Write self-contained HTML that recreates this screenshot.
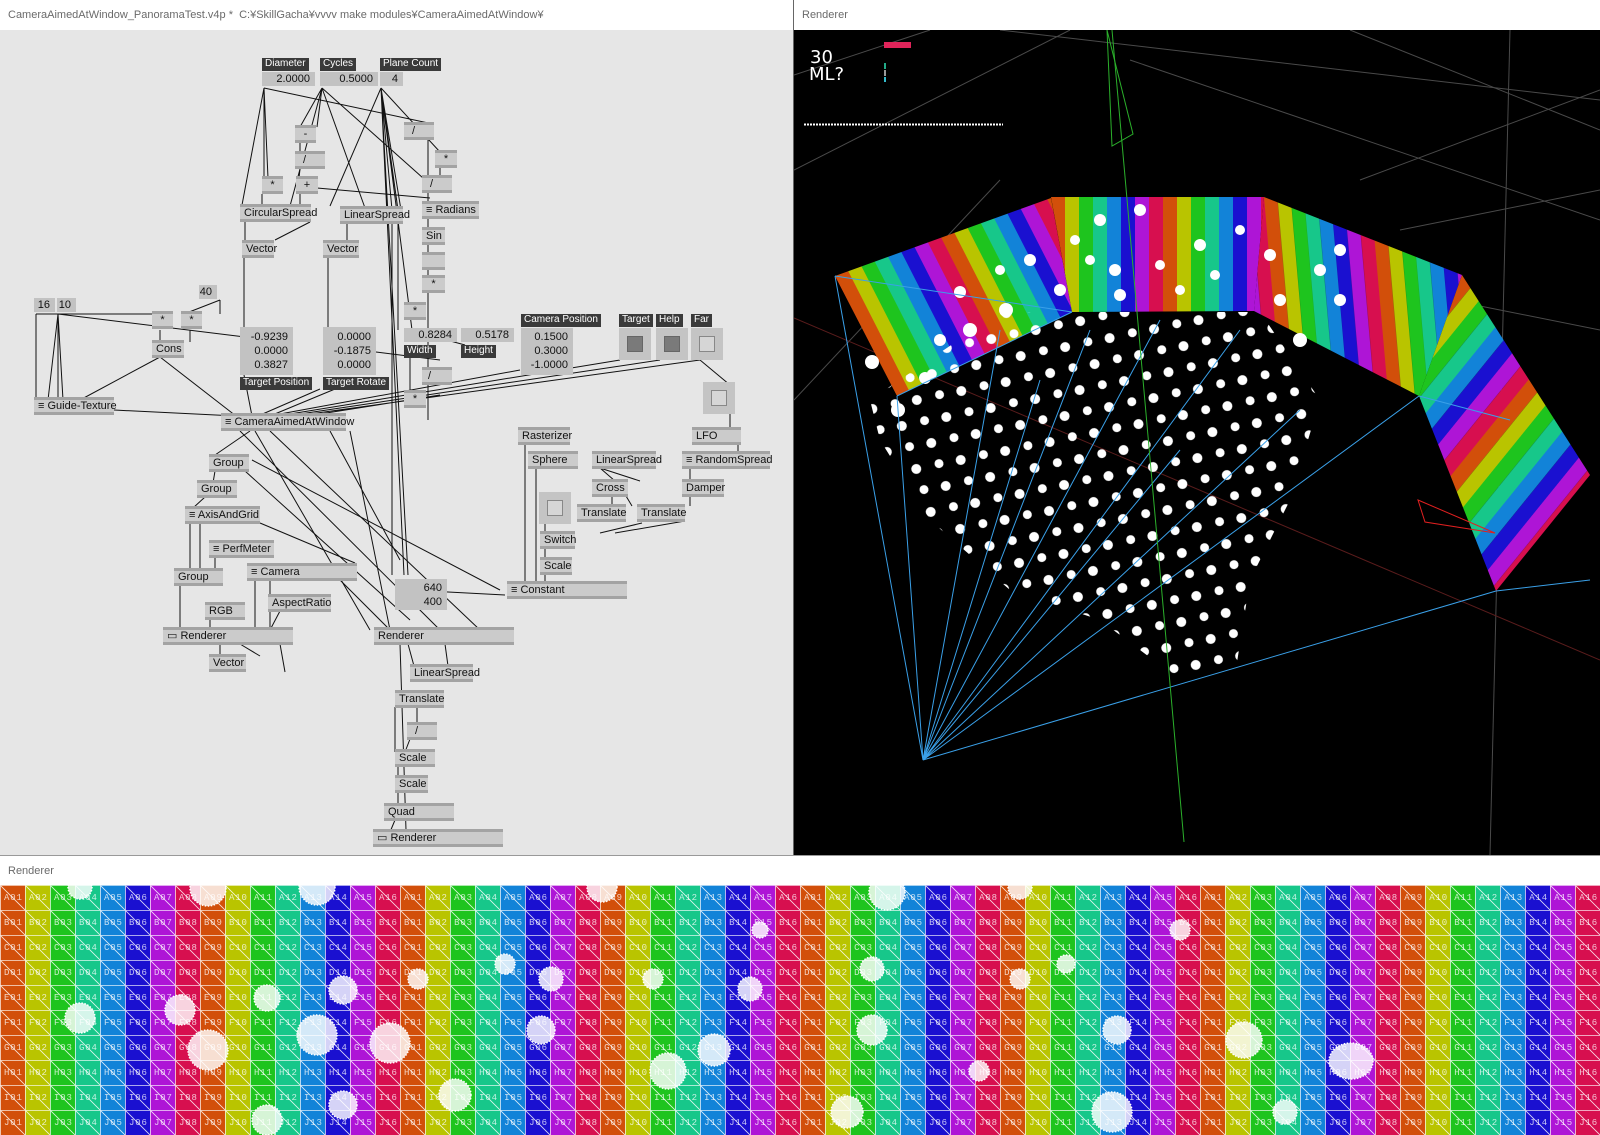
<!DOCTYPE html>
<html><head><meta charset="utf-8">
<style>
*{margin:0;padding:0;box-sizing:border-box}
body{width:1600px;height:1135px;overflow:hidden;background:#fff;font-family:"Liberation Sans","Noto Sans CJK JP",sans-serif;position:relative}
.title{position:absolute;font-size:11px;color:#6a6a6a}
#left{position:absolute;left:0;top:30px;width:793px;height:825px;background:#e6e6e6}
.n{position:absolute;background:#cbcbcb;height:18px;border-top:3px solid #a3a3a3;border-bottom:3px solid #a3a3a3;font-size:11px;line-height:12px;padding-left:4px;color:#111;white-space:nowrap}
.v{position:absolute;background:#c2c2c2;font-size:11px;line-height:14px;text-align:right;padding-right:5px;color:#111;white-space:pre}
.t{position:absolute;background:#3a3a3a;color:#fff;font-size:10px;line-height:12px;height:13px;padding:0 3px;white-space:nowrap}
.tg{position:absolute;background:#c4c4c4;width:32px;height:32px}
.tg i{position:absolute;left:8px;top:8px;width:16px;height:16px;border:1px solid #888;background:#d6d6d6}
.tg.on i{background:#7a7a7a;border-color:#666}
.grid-t{position:absolute;left:4px;font-family:"Liberation Mono",monospace;font-size:9px;letter-spacing:0.85px;color:rgba(255,255,255,0.75);white-space:pre;line-height:10px}
</style></head><body>
<div class="title" style="left:8px;top:9px">CameraAimedAtWindow_PanoramaTest.v4p *&nbsp; C:¥SkillGacha¥vvvv make modules¥CameraAimedAtWindow¥</div>
<div class="title" style="left:802px;top:9px">Renderer</div>
<div style="position:absolute;left:793px;top:0;width:1px;height:855px;background:#666"></div>

<div id="left">
<svg width="793" height="825" viewBox="0 30 793 825" style="position:absolute;left:0;top:0" stroke="#111" stroke-width="1" fill="none">
<path d="M264 88L264 178M264 88L268 178M264 88L433 124M264 88L242 205M322 88L300 127M322 88L317 127M322 88L365 208M322 88L423 178M322 88L290 206M381 88L392 210M381 88L398 210M381 88L401 210M381 88L440 152M381 88L330 206M381 88L412 330M381 88L408 575M381 88L404 575"/>
<path d="M300 143L300 153M300 169L299 178M262 194L262 205M300 194L300 205M440 168L440 177M428 140L428 420M428 193L428 203M428 219L428 228M428 245L428 258M428 278L428 300M317 188L430 198M245 222L245 240M310 222L275 240M347 224L347 240M244 258L244 330M328 258L328 330M398 224L398 330M392 224L392 575"/>
<path d="M36 314L36 400M58 314L48 400M58 314L58 400M58 314L63 400M58 314L245 337M36 314L155 314M220 300L184 314M220 300L220 314M160 330L160 342M190 330L190 342M160 357L80 400M160 357L236 416M114 410L236 416"/>
<path d="M244 375L252 416M320 389L258 416M335 389L270 416M376 352L440 360M410 345L410 392M410 330L465 345M280 414L520 370M290 414L620 360M300 414L660 360M310 414L700 360M320 414L440 395M250 431L215 455M350 431L390 630M255 431L370 630M240 431L440 630M270 431L480 630M330 431L400 560"/>
<path d="M215 471L213 483M205 497L193 508M245 471L410 620M252 460L500 590M260 523L355 563M190 523L190 570M200 523L200 570M215 557L215 570M180 586L180 630M210 619L210 630M255 580L255 630M270 580L270 630M280 611L270 630M220 644L220 656M240 644L260 656M280 644L285 672M340 580L390 630"/>
<path d="M525 444L525 583M536 468L536 583M600 468L615 481M600 468L640 481M612 496L612 506M626 496L632 506M730 410L730 430M738 444L738 452M690 468L690 480M690 496L690 506M642 523L600 533M685 521L615 533M545 524L545 533M545 548L545 560M545 574L545 583M410 590L505 595"/>
<path d="M400 644L406 830M408 644L414 666M445 644L448 666M395 707L395 752M417 707L417 723M410 739L405 752M398 766L398 777M398 792L398 805M395 820L390 832M700 360L730 385"/>
</svg>
<div class="t" style="left:262px;top:28px">Diameter</div><div class="v" style="left:262px;top:42px;width:53px">2.0000</div>
<div class="t" style="left:320px;top:28px">Cycles</div><div class="v" style="left:320px;top:42px;width:58px">0.5000</div>
<div class="t" style="left:380px;top:28px">Plane Count</div><div class="v" style="left:380px;top:42px;width:23px">4</div>
<div class="n" style="left:295px;top:95px;width:21px;text-align:center;padding:0">-</div>
<div class="n" style="left:295px;top:121px;width:30px;padding-left:8px">/</div>
<div class="n" style="left:262px;top:146px;width:21px;text-align:center;padding:0">*</div>
<div class="n" style="left:296px;top:146px;width:22px;text-align:center;padding:0">+</div>
<div class="n" style="left:240px;top:174px;width:71px">CircularSpread</div>
<div class="n" style="left:340px;top:176px;width:63px">LinearSpread</div>
<div class="n" style="left:404px;top:92px;width:30px;padding-left:8px">/</div>
<div class="n" style="left:435px;top:120px;width:22px;text-align:center;padding:0">*</div>
<div class="n" style="left:422px;top:145px;width:30px;padding-left:8px">/</div>
<div class="n" style="left:422px;top:171px;width:57px">≡ Radians</div>
<div class="n" style="left:422px;top:197px;width:23px">Sin</div>
<div class="n" style="left:422px;top:222px;width:23px"></div>
<div class="n" style="left:422px;top:245px;width:23px;text-align:center;padding:0">*</div>
<div class="n" style="left:242px;top:210px;width:32px">Vector</div>
<div class="n" style="left:323px;top:210px;width:36px">Vector</div>
<div class="v" style="left:34px;top:268px;width:21px">16</div><div class="v" style="left:57px;top:268px;width:19px">10</div>
<div class="v" style="left:199px;top:255px;width:18px">40</div>
<div class="n" style="left:152px;top:281px;width:21px;text-align:center;padding:0">*</div>
<div class="n" style="left:181px;top:281px;width:21px;text-align:center;padding:0">*</div>
<div class="n" style="left:152px;top:310px;width:32px">Cons</div>
<div class="n" style="left:34px;top:367px;width:80px">≡ Guide-Texture</div>
<div class="v" style="left:240px;top:297px;width:53px;height:48px;padding-top:3px">-0.9239
0.0000
0.3827</div>
<div class="t" style="left:240px;top:347px">Target Position</div>
<div class="v" style="left:323px;top:297px;width:53px;height:48px;padding-top:3px">0.0000
-0.1875
0.0000</div>
<div class="t" style="left:323px;top:347px">Target Rotate</div>
<div class="n" style="left:221px;top:383px;width:125px">≡ CameraAimedAtWindow</div>
<div class="n" style="left:404px;top:272px;width:22px;text-align:center;padding:0">*</div>
<div class="v" style="left:404px;top:298px;width:53px">0.8284</div><div class="t" style="left:404px;top:315px">Width</div>
<div class="v" style="left:461px;top:298px;width:53px">0.5178</div><div class="t" style="left:461px;top:315px">Height</div>
<div class="n" style="left:422px;top:337px;width:30px;padding-left:6px">/</div>
<div class="n" style="left:404px;top:360px;width:22px;text-align:center;padding:0">*</div>
<div class="t" style="left:521px;top:284px">Camera Position</div>
<div class="v" style="left:521px;top:298px;width:52px;height:47px;padding-top:2px">0.1500
0.3000
-1.0000</div>
<div class="t" style="left:619px;top:284px">Target</div><div class="tg on" style="left:619px;top:298px"><i></i></div>
<div class="t" style="left:656px;top:284px">Help</div><div class="tg on" style="left:656px;top:298px"><i></i></div>
<div class="t" style="left:691px;top:284px">Far</div><div class="tg" style="left:691px;top:298px"><i></i></div>
<div class="tg" style="left:703px;top:352px"><i></i></div>
<div class="n" style="left:518px;top:397px;width:52px">Rasterizer</div>
<div class="n" style="left:528px;top:421px;width:50px">Sphere</div>
<div class="n" style="left:592px;top:421px;width:64px">LinearSpread</div>
<div class="n" style="left:592px;top:449px;width:36px">Cross</div>
<div class="n" style="left:577px;top:474px;width:49px">Translate</div>
<div class="n" style="left:637px;top:474px;width:48px">Translate</div>
<div class="n" style="left:692px;top:397px;width:49px">LFO</div>
<div class="n" style="left:682px;top:421px;width:88px">≡ RandomSpread</div>
<div class="n" style="left:682px;top:449px;width:42px">Damper</div>
<div class="tg" style="left:539px;top:462px"><i></i></div>
<div class="n" style="left:540px;top:501px;width:35px">Switch</div>
<div class="n" style="left:540px;top:527px;width:32px">Scale</div>
<div class="n" style="left:507px;top:551px;width:120px">≡ Constant</div>
<div class="v" style="left:395px;top:549px;width:52px;height:31px;padding-top:2px">640
400</div>
<div class="n" style="left:209px;top:424px;width:40px">Group</div>
<div class="n" style="left:197px;top:450px;width:40px">Group</div>
<div class="n" style="left:185px;top:476px;width:75px">≡ AxisAndGrid</div>
<div class="n" style="left:209px;top:510px;width:65px">≡ PerfMeter</div>
<div class="n" style="left:174px;top:538px;width:49px">Group</div>
<div class="n" style="left:247px;top:533px;width:110px">≡ Camera</div>
<div class="n" style="left:268px;top:564px;width:63px">AspectRatio</div>
<div class="n" style="left:205px;top:572px;width:40px">RGB</div>
<div class="n" style="left:163px;top:597px;width:130px">▭ Renderer</div>
<div class="n" style="left:209px;top:624px;width:37px">Vector</div>
<div class="n" style="left:374px;top:597px;width:140px">Renderer</div>
<div class="n" style="left:410px;top:634px;width:63px">LinearSpread</div>
<div class="n" style="left:395px;top:660px;width:49px">Translate</div>
<div class="n" style="left:407px;top:692px;width:30px;padding-left:8px">/</div>
<div class="n" style="left:395px;top:719px;width:40px">Scale</div>
<div class="n" style="left:395px;top:745px;width:33px">Scale</div>
<div class="n" style="left:384px;top:773px;width:70px">Quad</div>
<div class="n" style="left:373px;top:799px;width:130px">▭ Renderer</div>
</div>

<svg style="position:absolute;left:794px;top:30px" width="806" height="825" viewBox="794 30 806 825">
<defs>
<pattern id="st" width="112" height="20" patternUnits="userSpaceOnUse">
<rect x="0" width="14" height="20" fill="#d24f0a"/><rect x="14" width="14" height="20" fill="#b9c400"/><rect x="28" width="14" height="20" fill="#1ec41e"/><rect x="42" width="14" height="20" fill="#17c78a"/><rect x="56" width="14" height="20" fill="#1283d8"/><rect x="70" width="14" height="20" fill="#1a10d0"/><rect x="84" width="14" height="20" fill="#ae15d6"/><rect x="98" width="14" height="20" fill="#d70f4f"/>
</pattern>
<pattern id="p1" href="#st" patternTransform="translate(835,276) rotate(-27)"/>
<pattern id="p2" href="#st" patternTransform="translate(1051,197)"/>
<pattern id="p3" href="#st" patternTransform="translate(1264,197) rotate(-5) scale(0.95,1)"/>
<pattern id="p4" href="#st" patternTransform="translate(1462,275) rotate(39) scale(1.05,1)"/>
<pattern id="dots" width="34" height="30" patternUnits="userSpaceOnUse" patternTransform="rotate(30)">
<circle cx="8" cy="8" r="5" fill="#fff"/><circle cx="25" cy="22" r="4.5" fill="#fff"/>
</pattern>
</defs>
<rect x="794" y="30" width="806" height="825" fill="#000"/>
<g stroke="#4a4a4a" stroke-width="1">
<line x1="794" y1="75" x2="930" y2="30"/><line x1="1000" y1="30" x2="1600" y2="100"/><line x1="1130" y1="60" x2="1600" y2="220"/><line x1="794" y1="170" x2="1070" y2="30"/><line x1="1350" y1="30" x2="1600" y2="130"/><line x1="1360" y1="180" x2="1600" y2="90"/><line x1="794" y1="400" x2="1000" y2="180"/><line x1="1510" y1="30" x2="1490" y2="855"/><line x1="1400" y1="230" x2="1600" y2="190"/><line x1="1450" y1="300" x2="1600" y2="330"/>
</g>
<line x1="794" y1="318" x2="1600" y2="660" stroke="#5a1c1c"/>
<polygon points="835,276 1051,198 1072,312 897,396" fill="url(#p1)"/>
<polygon points="1051,197 1264,197 1254,311 1072,312" fill="url(#p2)"/>
<polygon points="1264,197 1462,275 1419,396 1254,311" fill="url(#p3)"/>
<polygon points="1462,275 1590,475 1496,591 1419,396" fill="url(#p4)"/>
<polygon points="870,400 1000,312 1260,312 1320,400 1290,500 1250,580 1235,675 1180,680 1100,620 1010,590 930,520 880,440" fill="url(#dots)"/>
<g fill="#fff"><circle cx="872" cy="362" r="7"/><circle cx="898" cy="410" r="7"/><circle cx="925" cy="378" r="6"/><circle cx="960" cy="292" r="6"/><circle cx="1006" cy="310" r="7"/><circle cx="1115" cy="270" r="6"/><circle cx="1140" cy="210" r="6"/><circle cx="1200" cy="245" r="6"/><circle cx="1340" cy="250" r="6"/><circle cx="1300" cy="340" r="7"/><circle cx="1320" cy="270" r="6"/><circle cx="1100" cy="220" r="6"/><circle cx="1240" cy="230" r="5"/>
<circle cx="1090" cy="260" r="5"/><circle cx="1160" cy="265" r="5"/><circle cx="1120" cy="295" r="6"/><circle cx="1180" cy="290" r="5"/><circle cx="1075" cy="240" r="5"/><circle cx="1215" cy="275" r="5"/><circle cx="1060" cy="290" r="6"/><circle cx="970" cy="330" r="7"/><circle cx="940" cy="340" r="6"/><circle cx="1270" cy="255" r="6"/><circle cx="1280" cy="300" r="6"/><circle cx="1340" cy="300" r="6"/><circle cx="1030" cy="260" r="6"/><circle cx="1000" cy="270" r="5"/></g>
<g stroke="#3aa0e8" stroke-width="1" fill="none">
<path d="M923 760L835 276M923 760L897 396M923 760L1000 330M923 760L1040 380M923 760L1090 330M923 760L1160 320M923 760L1240 330M923 760L1300 410M923 760L1180 450M923 760L1496 591M923 760L1419 396M1496 591L1590 580M1419 396L1510 420M897 396L1072 312M835 276L1072 312"/>
</g>
<line x1="1112" y1="30" x2="1184" y2="842" stroke="#2bb02b"/>
<polygon points="1107,30 1133,134 1112,146" fill="none" stroke="#2bb02b"/>
<polygon points="1418,500 1495,533 1425,522" fill="none" stroke="#e02020"/>
<text x="810" y="63" fill="#fff" font-family="DejaVu Sans,sans-serif" font-size="18">30</text>
<text x="809" y="80" fill="#fff" font-family="DejaVu Sans,sans-serif" font-size="18">ML?</text>
<rect x="884" y="42" width="27" height="6" fill="#e0245a"/>
<rect x="884" y="63" width="2" height="6" fill="#2a8"/><rect x="884" y="70" width="2" height="6" fill="#999"/><rect x="884" y="77" width="2" height="5" fill="#3bc"/>
<line x1="804" y1="124.5" x2="1003" y2="124.5" stroke="#fff" stroke-width="2" stroke-dasharray="2,1"/>
</svg>

<div style="position:absolute;left:0;top:855px;width:1600px;height:1px;background:#999"></div>
<div class="title" style="left:8px;top:865px">Renderer</div>

<svg style="position:absolute;left:0;top:885px" width="1600" height="250">
<defs>
<pattern id="cols" width="200" height="25" patternUnits="userSpaceOnUse">
<rect x="0" width="25" height="25" fill="#d24f0a"/><rect x="25" width="25" height="25" fill="#b9c400"/><rect x="50" width="25" height="25" fill="#1ec41e"/><rect x="75" width="25" height="25" fill="#17c78a"/><rect x="100" width="25" height="25" fill="#1283d8"/><rect x="125" width="25" height="25" fill="#1a10d0"/><rect x="150" width="25" height="25" fill="#ae15d6"/><rect x="175" width="25" height="25" fill="#d70f4f"/>
</pattern>
<pattern id="ln" width="25" height="25" patternUnits="userSpaceOnUse">
<path d="M0 0.5H25M0.5 0V25M0 0L25 25" stroke="#fff" stroke-width="0.8" opacity="0.85" fill="none"/>
</pattern>
</defs>
<rect width="1600" height="250" fill="url(#cols)"/>
<rect width="1600" height="250" fill="url(#ln)"/>
</svg>
<div style="position:absolute;left:0;top:885px;width:1600px;height:250px;overflow:hidden">
<div class="grid-t" style="top:8px">A01 A02 A03 A04 A05 A06 A07 A08 A09 A10 A11 A12 A13 A14 A15 A16 A01 A02 A03 A04 A05 A06 A07 A08 A09 A10 A11 A12 A13 A14 A15 A16 A01 A02 A03 A04 A05 A06 A07 A08 A09 A10 A11 A12 A13 A14 A15 A16 A01 A02 A03 A04 A05 A06 A07 A08 A09 A10 A11 A12 A13 A14 A15 A16</div>
<div class="grid-t" style="top:33px">B01 B02 B03 B04 B05 B06 B07 B08 B09 B10 B11 B12 B13 B14 B15 B16 B01 B02 B03 B04 B05 B06 B07 B08 B09 B10 B11 B12 B13 B14 B15 B16 B01 B02 B03 B04 B05 B06 B07 B08 B09 B10 B11 B12 B13 B14 B15 B16 B01 B02 B03 B04 B05 B06 B07 B08 B09 B10 B11 B12 B13 B14 B15 B16</div>
<div class="grid-t" style="top:58px">C01 C02 C03 C04 C05 C06 C07 C08 C09 C10 C11 C12 C13 C14 C15 C16 C01 C02 C03 C04 C05 C06 C07 C08 C09 C10 C11 C12 C13 C14 C15 C16 C01 C02 C03 C04 C05 C06 C07 C08 C09 C10 C11 C12 C13 C14 C15 C16 C01 C02 C03 C04 C05 C06 C07 C08 C09 C10 C11 C12 C13 C14 C15 C16</div>
<div class="grid-t" style="top:83px">D01 D02 D03 D04 D05 D06 D07 D08 D09 D10 D11 D12 D13 D14 D15 D16 D01 D02 D03 D04 D05 D06 D07 D08 D09 D10 D11 D12 D13 D14 D15 D16 D01 D02 D03 D04 D05 D06 D07 D08 D09 D10 D11 D12 D13 D14 D15 D16 D01 D02 D03 D04 D05 D06 D07 D08 D09 D10 D11 D12 D13 D14 D15 D16</div>
<div class="grid-t" style="top:108px">E01 E02 E03 E04 E05 E06 E07 E08 E09 E10 E11 E12 E13 E14 E15 E16 E01 E02 E03 E04 E05 E06 E07 E08 E09 E10 E11 E12 E13 E14 E15 E16 E01 E02 E03 E04 E05 E06 E07 E08 E09 E10 E11 E12 E13 E14 E15 E16 E01 E02 E03 E04 E05 E06 E07 E08 E09 E10 E11 E12 E13 E14 E15 E16</div>
<div class="grid-t" style="top:133px">F01 F02 F03 F04 F05 F06 F07 F08 F09 F10 F11 F12 F13 F14 F15 F16 F01 F02 F03 F04 F05 F06 F07 F08 F09 F10 F11 F12 F13 F14 F15 F16 F01 F02 F03 F04 F05 F06 F07 F08 F09 F10 F11 F12 F13 F14 F15 F16 F01 F02 F03 F04 F05 F06 F07 F08 F09 F10 F11 F12 F13 F14 F15 F16</div>
<div class="grid-t" style="top:158px">G01 G02 G03 G04 G05 G06 G07 G08 G09 G10 G11 G12 G13 G14 G15 G16 G01 G02 G03 G04 G05 G06 G07 G08 G09 G10 G11 G12 G13 G14 G15 G16 G01 G02 G03 G04 G05 G06 G07 G08 G09 G10 G11 G12 G13 G14 G15 G16 G01 G02 G03 G04 G05 G06 G07 G08 G09 G10 G11 G12 G13 G14 G15 G16</div>
<div class="grid-t" style="top:183px">H01 H02 H03 H04 H05 H06 H07 H08 H09 H10 H11 H12 H13 H14 H15 H16 H01 H02 H03 H04 H05 H06 H07 H08 H09 H10 H11 H12 H13 H14 H15 H16 H01 H02 H03 H04 H05 H06 H07 H08 H09 H10 H11 H12 H13 H14 H15 H16 H01 H02 H03 H04 H05 H06 H07 H08 H09 H10 H11 H12 H13 H14 H15 H16</div>
<div class="grid-t" style="top:208px">I01 I02 I03 I04 I05 I06 I07 I08 I09 I10 I11 I12 I13 I14 I15 I16 I01 I02 I03 I04 I05 I06 I07 I08 I09 I10 I11 I12 I13 I14 I15 I16 I01 I02 I03 I04 I05 I06 I07 I08 I09 I10 I11 I12 I13 I14 I15 I16 I01 I02 I03 I04 I05 I06 I07 I08 I09 I10 I11 I12 I13 I14 I15 I16</div>
<div class="grid-t" style="top:233px">J01 J02 J03 J04 J05 J06 J07 J08 J09 J10 J11 J12 J13 J14 J15 J16 J01 J02 J03 J04 J05 J06 J07 J08 J09 J10 J11 J12 J13 J14 J15 J16 J01 J02 J03 J04 J05 J06 J07 J08 J09 J10 J11 J12 J13 J14 J15 J16 J01 J02 J03 J04 J05 J06 J07 J08 J09 J10 J11 J12 J13 J14 J15 J16</div>
</div>
<svg style="position:absolute;left:0;top:885px" width="1600" height="250" viewBox="0 885 1600 250">
<g fill="#fff" fill-opacity="0.82" stroke="#fff" stroke-width="1.5" stroke-dasharray="1.5,1.5">
<circle cx="80" cy="1018" r="15"/><circle cx="180" cy="1010" r="15"/><circle cx="208" cy="1050" r="20"/><circle cx="267" cy="998" r="13"/><circle cx="317" cy="1035" r="20"/><circle cx="343" cy="990" r="14"/><circle cx="343" cy="1105" r="14"/><circle cx="267" cy="1120" r="15"/><circle cx="208" cy="888" r="18"/><circle cx="317" cy="887" r="18"/><circle cx="80" cy="887" r="12"/><circle cx="390" cy="1043" r="20"/>
<circle cx="418" cy="979" r="10"/><circle cx="505" cy="964" r="10"/><circle cx="551" cy="979" r="12"/><circle cx="541" cy="1030" r="14"/><circle cx="653" cy="979" r="10"/><circle cx="668" cy="1071" r="18"/><circle cx="714" cy="1050" r="16"/><circle cx="750" cy="989" r="12"/><circle cx="872" cy="969" r="12"/><circle cx="872" cy="1030" r="15"/><circle cx="847" cy="1112" r="16"/><circle cx="979" cy="1071" r="10"/><circle cx="1066" cy="964" r="9"/><circle cx="1117" cy="1030" r="14"/><circle cx="1244" cy="1040" r="18"/><ellipse cx="1351" cy="1061" rx="22" ry="18"/><circle cx="1112" cy="1112" r="20"/><circle cx="887" cy="892" r="18"/><circle cx="602" cy="887" r="15"/><circle cx="1020" cy="887" r="12"/><circle cx="1285" cy="1112" r="12"/><circle cx="1020" cy="979" r="10"/><circle cx="455" cy="1095" r="16"/><circle cx="760" cy="930" r="8"/><circle cx="1180" cy="930" r="10"/>
</g>
</svg>
</body></html>
